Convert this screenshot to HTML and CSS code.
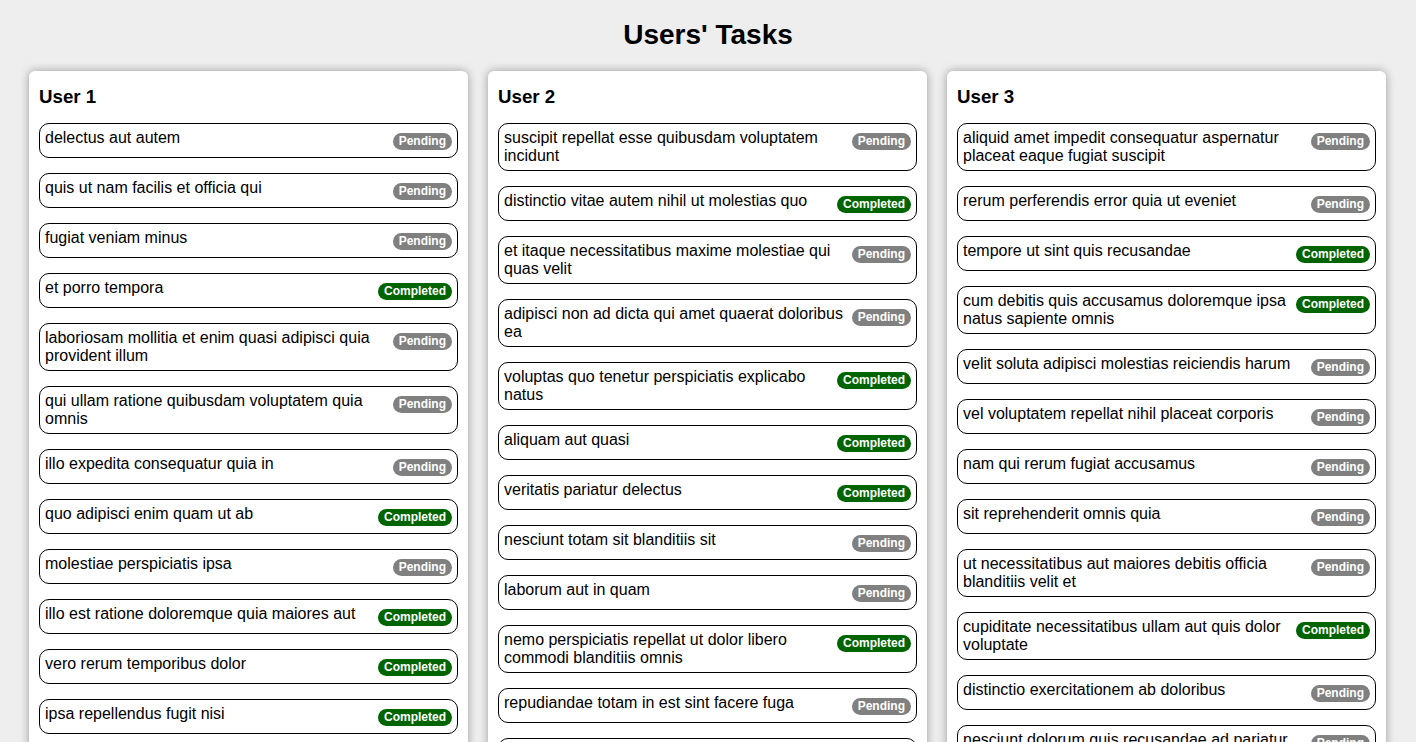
FILE: index.html
```html
<!DOCTYPE html>
<html lang="en">
<head>
<meta charset="utf-8">
<title>Users' Tasks</title>
<link rel="stylesheet" href="styles.css">
</head>
<body>
<h1 class="title">Users' Tasks</h1>
<div class="board">
  <section class="card">
    <h3 class="card-title">User 1</h3>
    <ul class="tasks">
      <li class="task"><span class="task-text">delectus aut autem</span><span class="badge pending">Pending</span></li>
      <li class="task"><span class="task-text">quis ut nam facilis et officia qui</span><span class="badge pending">Pending</span></li>
      <li class="task"><span class="task-text">fugiat veniam minus</span><span class="badge pending">Pending</span></li>
      <li class="task"><span class="task-text">et porro tempora</span><span class="badge completed">Completed</span></li>
      <li class="task"><span class="task-text">laboriosam mollitia et enim quasi adipisci quia provident illum</span><span class="badge pending">Pending</span></li>
      <li class="task"><span class="task-text">qui ullam ratione quibusdam voluptatem quia omnis</span><span class="badge pending">Pending</span></li>
      <li class="task"><span class="task-text">illo expedita consequatur quia in</span><span class="badge pending">Pending</span></li>
      <li class="task"><span class="task-text">quo adipisci enim quam ut ab</span><span class="badge completed">Completed</span></li>
      <li class="task"><span class="task-text">molestiae perspiciatis ipsa</span><span class="badge pending">Pending</span></li>
      <li class="task"><span class="task-text">illo est ratione doloremque quia maiores aut</span><span class="badge completed">Completed</span></li>
      <li class="task"><span class="task-text">vero rerum temporibus dolor</span><span class="badge completed">Completed</span></li>
      <li class="task"><span class="task-text">ipsa repellendus fugit nisi</span><span class="badge completed">Completed</span></li>
      <li class="task"><span class="task-text">et doloremque nulla</span><span class="badge pending">Pending</span></li>
      <li class="task"><span class="task-text">repellendus sunt dolores architecto voluptatum</span><span class="badge completed">Completed</span></li>
      <li class="task"><span class="task-text">ab voluptatum amet voluptas</span><span class="badge completed">Completed</span></li>
      <li class="task"><span class="task-text">accusamus eos facilis sint et aut voluptatem</span><span class="badge completed">Completed</span></li>
      <li class="task"><span class="task-text">quo laboriosam deleniti aut qui</span><span class="badge completed">Completed</span></li>
      <li class="task"><span class="task-text">dolorum est consequatur ea mollitia in culpa</span><span class="badge pending">Pending</span></li>
      <li class="task"><span class="task-text">molestiae ipsa aut voluptatibus pariatur dolor nihil</span><span class="badge completed">Completed</span></li>
      <li class="task"><span class="task-text">ullam nobis libero sapiente ad optio sint</span><span class="badge completed">Completed</span></li>
    </ul>
  </section>
  <section class="card">
    <h3 class="card-title">User 2</h3>
    <ul class="tasks">
      <li class="task"><span class="task-text">suscipit repellat esse quibusdam voluptatem incidunt</span><span class="badge pending">Pending</span></li>
      <li class="task"><span class="task-text">distinctio vitae autem nihil ut molestias quo</span><span class="badge completed">Completed</span></li>
      <li class="task"><span class="task-text">et itaque necessitatibus maxime molestiae qui quas velit</span><span class="badge pending">Pending</span></li>
      <li class="task"><span class="task-text">adipisci non ad dicta qui amet quaerat doloribus ea</span><span class="badge pending">Pending</span></li>
      <li class="task"><span class="task-text">voluptas quo tenetur perspiciatis explicabo natus</span><span class="badge completed">Completed</span></li>
      <li class="task"><span class="task-text">aliquam aut quasi</span><span class="badge completed">Completed</span></li>
      <li class="task"><span class="task-text">veritatis pariatur delectus</span><span class="badge completed">Completed</span></li>
      <li class="task"><span class="task-text">nesciunt totam sit blanditiis sit</span><span class="badge pending">Pending</span></li>
      <li class="task"><span class="task-text">laborum aut in quam</span><span class="badge pending">Pending</span></li>
      <li class="task"><span class="task-text">nemo perspiciatis repellat ut dolor libero commodi blanditiis omnis</span><span class="badge completed">Completed</span></li>
      <li class="task"><span class="task-text">repudiandae totam in est sint facere fuga</span><span class="badge pending">Pending</span></li>
      <li class="task"><span class="task-text">earum doloribus ea doloremque quis</span><span class="badge pending">Pending</span></li>
      <li class="task"><span class="task-text">sint sit aut vero</span><span class="badge pending">Pending</span></li>
      <li class="task"><span class="task-text">porro aut necessitatibus eaque distinctio</span><span class="badge pending">Pending</span></li>
      <li class="task"><span class="task-text">repellendus veritatis molestias dicta incidunt</span><span class="badge completed">Completed</span></li>
      <li class="task"><span class="task-text">excepturi deleniti adipisci voluptatem et neque optio illum ad</span><span class="badge completed">Completed</span></li>
      <li class="task"><span class="task-text">sunt cum tempora</span><span class="badge pending">Pending</span></li>
      <li class="task"><span class="task-text">totam quia non</span><span class="badge pending">Pending</span></li>
      <li class="task"><span class="task-text">doloremque quibusdam asperiores libero corrupti illum qui omnis</span><span class="badge pending">Pending</span></li>
      <li class="task"><span class="task-text">totam atque quo nesciunt</span><span class="badge completed">Completed</span></li>
    </ul>
  </section>
  <section class="card">
    <h3 class="card-title">User 3</h3>
    <ul class="tasks">
      <li class="task"><span class="task-text">aliquid amet impedit consequatur aspernatur placeat eaque fugiat suscipit</span><span class="badge pending">Pending</span></li>
      <li class="task"><span class="task-text">rerum perferendis error quia ut eveniet</span><span class="badge pending">Pending</span></li>
      <li class="task"><span class="task-text">tempore ut sint quis recusandae</span><span class="badge completed">Completed</span></li>
      <li class="task"><span class="task-text">cum debitis quis accusamus doloremque ipsa natus sapiente omnis</span><span class="badge completed">Completed</span></li>
      <li class="task"><span class="task-text">velit soluta adipisci molestias reiciendis harum</span><span class="badge pending">Pending</span></li>
      <li class="task"><span class="task-text">vel voluptatem repellat nihil placeat corporis</span><span class="badge pending">Pending</span></li>
      <li class="task"><span class="task-text">nam qui rerum fugiat accusamus</span><span class="badge pending">Pending</span></li>
      <li class="task"><span class="task-text">sit reprehenderit omnis quia</span><span class="badge pending">Pending</span></li>
      <li class="task"><span class="task-text">ut necessitatibus aut maiores debitis officia blanditiis velit et</span><span class="badge pending">Pending</span></li>
      <li class="task"><span class="task-text">cupiditate necessitatibus ullam aut quis dolor voluptate</span><span class="badge completed">Completed</span></li>
      <li class="task"><span class="task-text">distinctio exercitationem ab doloribus</span><span class="badge pending">Pending</span></li>
      <li class="task"><span class="task-text">nesciunt dolorum quis recusandae ad pariatur ratione</span><span class="badge pending">Pending</span></li>
      <li class="task"><span class="task-text">qui labore est occaecati recusandae aliquid quam</span><span class="badge pending">Pending</span></li>
      <li class="task"><span class="task-text">quis et est ut voluptate quam dolor</span><span class="badge completed">Completed</span></li>
      <li class="task"><span class="task-text">voluptatum omnis minima qui occaecati provident nulla voluptatem ratione</span><span class="badge completed">Completed</span></li>
      <li class="task"><span class="task-text">deleniti ea temporibus enim</span><span class="badge completed">Completed</span></li>
      <li class="task"><span class="task-text">pariatur et magnam ea doloribus similique voluptatem rerum quia</span><span class="badge pending">Pending</span></li>
      <li class="task"><span class="task-text">est dicta totam qui explicabo doloribus qui dignissimos</span><span class="badge pending">Pending</span></li>
      <li class="task"><span class="task-text">perspiciatis velit id laborum placeat iusto et aliquam odio</span><span class="badge pending">Pending</span></li>
      <li class="task"><span class="task-text">et sequi qui architecto ut adipisci</span><span class="badge completed">Completed</span></li>
    </ul>
  </section>
</div>
</body>
</html>
```
FILE: styles.css
```css
html, body {
  margin: 0;
  padding: 0;
}
body {
  background: #eeeeee;
  font-family: "Liberation Sans", Arial, sans-serif;
  color: #000;
  font-size: 16px;
}
.title {
  margin: 19px 0 20px;
  font-size: 28px;
  font-weight: bold;
  text-align: center;
  line-height: 32px;
}
.board {
  display: grid;
  grid-template-columns: repeat(3, 1fr);
  column-gap: 20px;
  padding: 0 30px 20px 29px;
  align-items: start;
}
.card {
  background: #fff;
  border-radius: 6px;
  box-shadow: 0 0 10px rgba(0, 0, 0, 0.35);
  padding: 10px;
}
.card-title {
  margin: 5px 0 15px;
  font-size: 18.72px;
  font-weight: bold;
  line-height: 21.5px;
}
.tasks {
  list-style: none;
  margin: 0;
  padding: 0;
}
.task {
  display: flex;
  align-items: flex-start;
  justify-content: space-between;
  border: 1px solid #000;
  border-radius: 10px;
  padding: 5px;
  margin-bottom: 15px;
}
.task-text {
  flex: 1;
  line-height: 18px;
}
.badge {
  flex: none;
  margin: 4px 0 2px 5px;
  padding: 2px 6px;
  border-radius: 10px;
  font-size: 12px;
  line-height: 13px;
  font-weight: bold;
  color: #fff;
}
.pending {
  background: #808080;
}
.completed {
  background: #006400;
}
```
